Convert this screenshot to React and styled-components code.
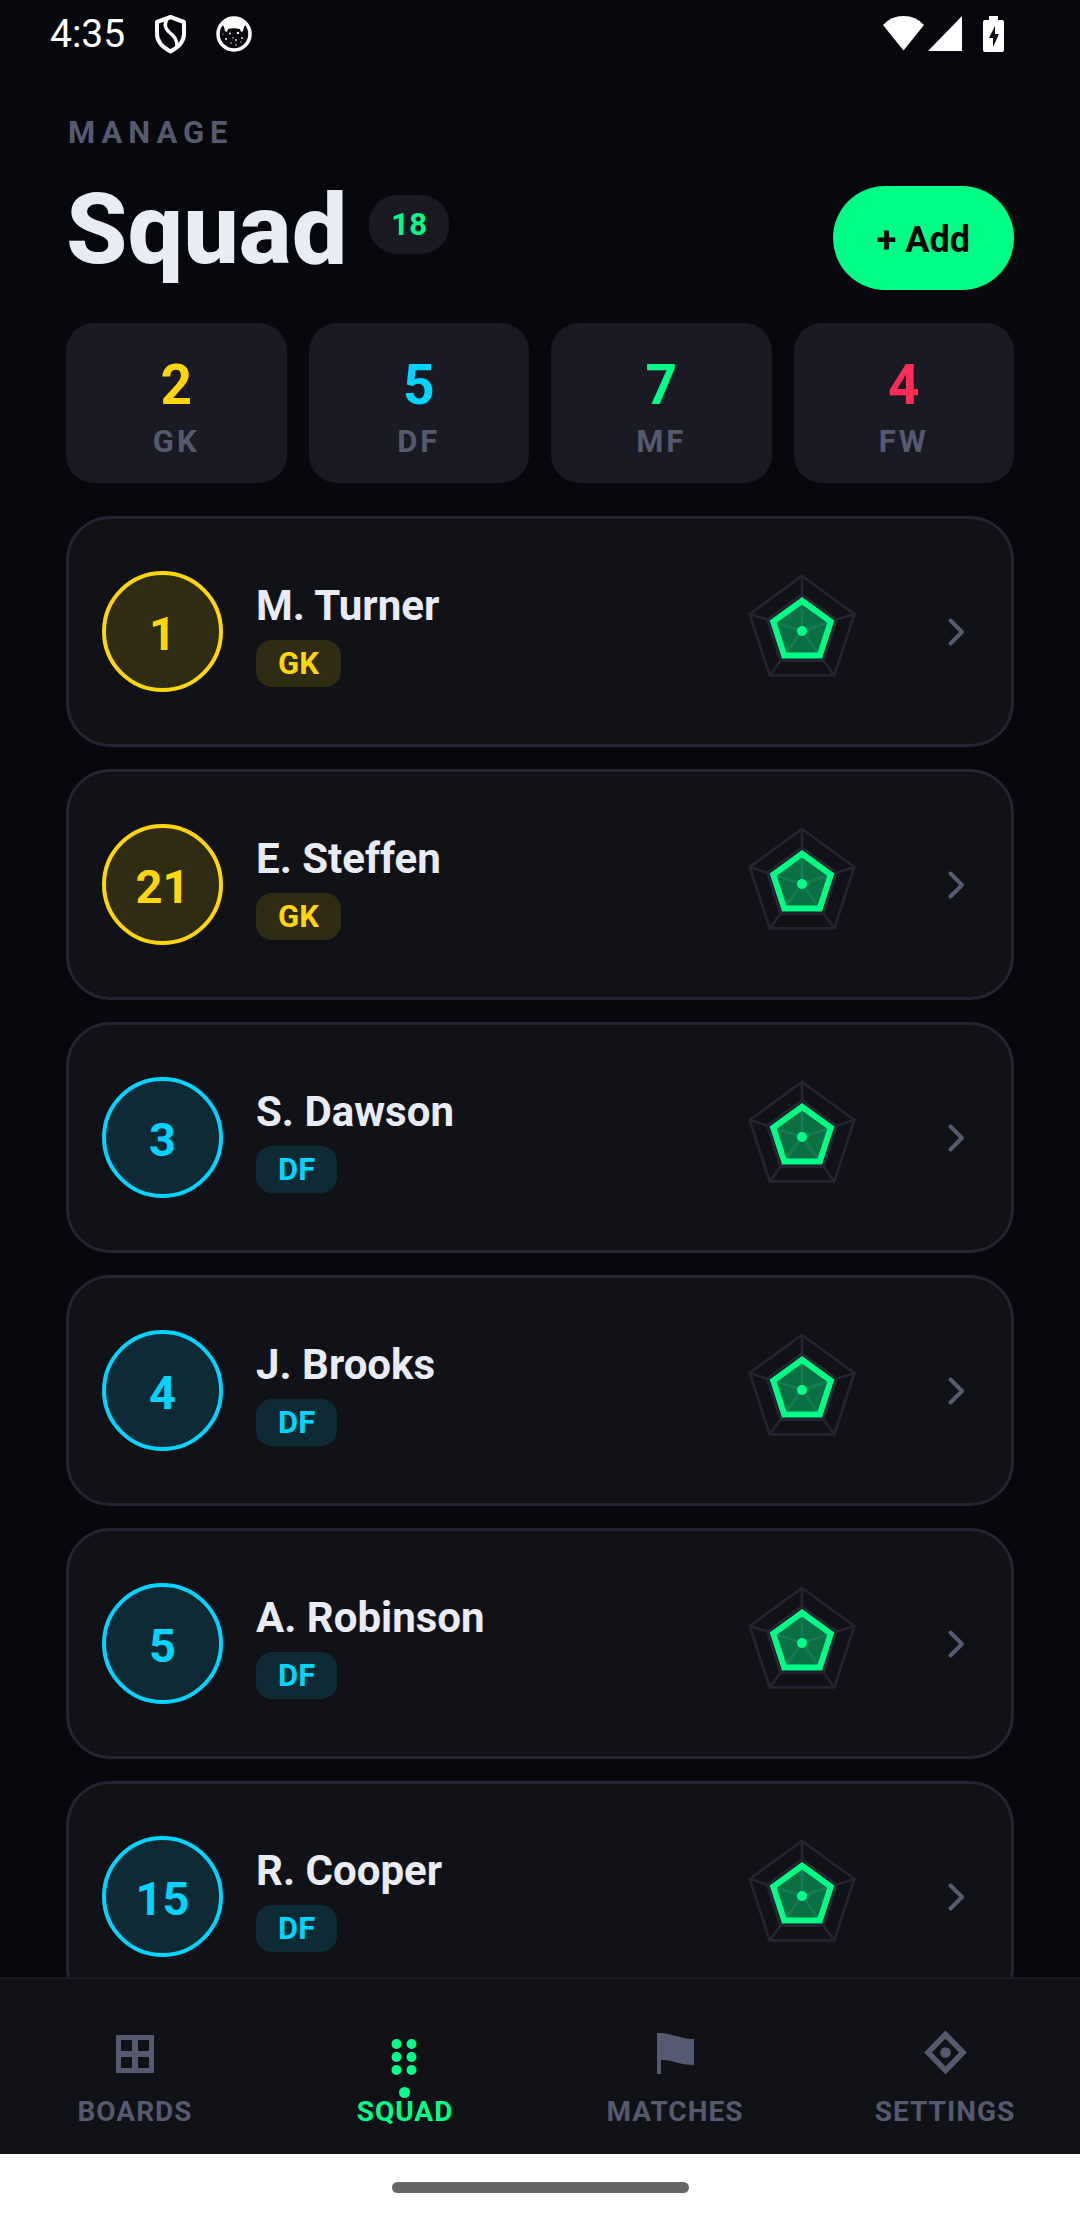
import React from "react";
import styled, { createGlobalStyle } from "styled-components";

const colors = {
    GK: "#ffd60a",
    DF: "#00d4ff",
    MF: "#00ff87",
    FW: "#ff2d55",
};

const stats = [
    { role: "GK", count: 2 },
    { role: "DF", count: 5 },
    { role: "MF", count: 7 },
    { role: "FW", count: 4 },
];

const players = [
    { number: 1, name: "M. Turner", role: "GK" },
    { number: 21, name: "E. Steffen", role: "GK" },
    { number: 3, name: "S. Dawson", role: "DF" },
    { number: 4, name: "J. Brooks", role: "DF" },
    { number: 5, name: "A. Robinson", role: "DF" },
    { number: 15, name: "R. Cooper", role: "DF" },
];

function App(){
    return (
        <Screen>
            <GlobalStyle />
            <StatusBar>
                <span>4:35</span>
                <ShieldIcon />
                <CatIcon />
                <SystemIcons />
            </StatusBar>
            <Header>
                <div>
                    <Eyebrow>MANAGE</Eyebrow>
                    <TitleRow>
                        <Title>Squad</Title>
                        <Count>18</Count>
                    </TitleRow>
                </div>
                <AddButton type="button">+ Add</AddButton>
            </Header>
            <Stats>
                {stats.map((stat) => (
                    <Stat key={stat.role} $color={colors[stat.role]}>
                        <strong>{stat.count}</strong>
                        <span>{stat.role}</span>
                    </Stat>
                ))}
            </Stats>
            <List>
                {players.map((player) => (
                    <li key={player.number}>
                        <PlayerCard player={player} />
                    </li>
                ))}
            </List>
            <Nav>
                <NavItem href="#boards"><BoardsIcon />BOARDS</NavItem>
                <NavItem href="#squad" aria-current="page"><SquadIcon />SQUAD<ActiveDot /></NavItem>
                <NavItem href="#matches"><MatchesIcon />MATCHES</NavItem>
                <NavItem href="#settings"><SettingsIcon />SETTINGS</NavItem>
            </Nav>
            <GestureBar><div /></GestureBar>
        </Screen>
    )
}

function PlayerCard({ player }){
    return (
        <Card type="button">
            <Shirt $color={colors[player.role]}>{player.number}</Shirt>
            <Info>
                <Name>{player.name}</Name>
                <Role $color={colors[player.role]}>{player.role}</Role>
            </Info>
            <Radar />
            <Chevron />
        </Card>
    )
}

//Five corners of a pentagon, the first one pointing up
const corners = (radius) => [0, 1, 2, 3, 4].map((i) => {
    const angle = (i * 72 - 90) * Math.PI / 180;
    return [radius * Math.cos(angle), radius * Math.sin(angle)];
});

const Radar = () => (
    <RadarSvg viewBox="-83 -82 165 165" aria-hidden="true">
        <g fill="none" stroke="#252433" strokeWidth="2.75">
            <polygon points={corners(55).join(" ")} />
            <polygon points={corners(36.5).join(" ")} />
            {corners(55).map(([x, y], i) => <line key={i} x1="0" y1="0" x2={x} y2={y} />)}
        </g>
        <polygon points={corners(30.3).join(" ")} fill="#00ff87" fillOpacity="0.4" stroke="#00ff87" strokeWidth="6" />
        <circle r="5" fill="#00ff87" />
    </RadarSvg>
);

const Chevron = () => (
    <svg width="44" height="44" viewBox="0 0 44 44" aria-hidden="true">
        <path d="M16.5 10.5 28 22 16.5 33.5" fill="none" stroke="#555a70" strokeWidth="4" strokeLinecap="round" strokeLinejoin="round" />
    </svg>
);

const ShieldIcon = () => (
    <svg width="31" height="38" viewBox="0 0 31 38" fill="none" stroke="#fff" aria-hidden="true">
        <path d="M15.5 2 29 7v12c0 7-5 13-13.500 17.500C7 32 2 26 2 19V7Z" strokeWidth="4" strokeLinejoin="round" />
        <path d="M12 4C9 10 10 13 14 17c5 4 8 7 8 14" strokeWidth="3.500" />
    </svg>
);

const CatIcon = () => (
    <svg width="36" height="36" viewBox="0 0 36 36" aria-hidden="true">
        <circle cx="18" cy="18" r="16" fill="none" stroke="#fff" strokeWidth="3.500" />
        <path d="M6 8C9 4 13 2 18 2s9 2 12 6l-2 3-1 4-2 1-1-3c-4-1-8-1-12 0l-1 3-2-1-1-4Z" fill="#fff" />
        <g fill="#fff">
            <circle cx="14" cy="17.500" r="0.900" /><circle cx="22" cy="17" r="1.200" />
            <circle cx="10" cy="23" r="1" /><circle cx="17" cy="22" r="0.700" />
            <circle cx="20" cy="24" r="0.900" /><circle cx="26" cy="22" r="0.900" />
            <circle cx="15" cy="27" r="0.700" /><circle cx="20" cy="29" r="0.700" />
            <circle cx="25" cy="26" r="0.600" /><circle cx="7" cy="18" r="0.600" />
        </g>
    </svg>
);

const SystemIcons = () => (
    <SystemSvg viewBox="0 0 121 38" fill="#fff" aria-hidden="true">
        <path d="M0 10Q8 1 20.500 1T41 10L20.500 35.500Z" />
        <path d="M79 1v35H45Z" />
        <path fillRule="evenodd" d="M106 1h9v4h4q2 0 2 2v28q0 2-2 2h-17q-2 0-2-2V7q0-2 2-2h4ZM112 11l-6 12h4v9l6-13h-4Z" />
    </SystemSvg>
);

const BoardsIcon = () => (
    <svg width="44" height="44" viewBox="0 0 44 44" aria-hidden="true">
        <path fillRule="evenodd" fill="currentColor" d="M3 3h38v38H3ZM8 8v11h11V8ZM25 8v11h11V8ZM8 25v11h11V25ZM25 25v11h11V25Z" />
    </svg>
);

const SquadIcon = () => (
    <svg width="44" height="44" viewBox="0 0 44 44" fill="currentColor" aria-hidden="true">
        {[12, 25, 38].map((y) => (
            <g key={y}>
                <circle cx="13.5" cy={y} r="5" />
                <circle cx="28.5" cy={y} r="5" />
            </g>
        ))}
    </svg>
);

const MatchesIcon = () => (
    <svg width="44" height="44" viewBox="0 0 44 44" aria-hidden="true">
        <path fill="currentColor" d="M4 1c17 0 22 6 37 6v26c-15 0-20-5-33-5v14H4Z" />
    </svg>
);

const SettingsIcon = () => (
    <svg width="44" height="44" viewBox="0 0 44 44" aria-hidden="true">
        <path d="M22.5 2.500 40 20.500 22.5 38.500 5 20.500Z" fill="none" stroke="currentColor" strokeWidth="5.500" />
        <circle cx="22.5" cy="20.500" r="5.300" fill="currentColor" />
    </svg>
);

const GlobalStyle = createGlobalStyle`
    *{
        margin: 0;
        padding: 0;
        box-sizing: border-box;
    }
    body{
        background: #07080d;
        font-family: Roboto, sans-serif;
    }
    button{
        font-family: inherit;
        border: none;
        cursor: pointer;
    }
    svg{
        display: block;
        flex-shrink: 0;
        overflow: visible;
    }
`;

const Screen = styled.main`
    height: 100vh;
    display: flex;
    flex-direction: column;
    color: #eaecf5;
`;

const StatusBar = styled.div`
    display: flex;
    align-items: center;
    gap: 30px;
    height: 67px;
    padding: 0px 76px 0px 50px;
    font-size: 39px;
    color: white;
`;

const SystemSvg = styled.svg`
    width: 121px;
    height: 38px;
    margin-left: auto;
`;

const Header = styled.header`
    display: flex;
    align-items: flex-end;
    justify-content: space-between;
    padding: 48px 66px 0px 66px;
`;

const Eyebrow = styled.p`
    padding-left: 2px;
    font-size: 31px;
    line-height: 35px;
    font-weight: 700;
    letter-spacing: 6px;
    color: #555a70;
`;

const TitleRow = styled.div`
    display: flex;
    align-items: center;
    gap: 22px;
    margin-top: 19px;
`;

const Title = styled.h1`
    font-size: 99px;
    line-height: 121px;
    font-weight: 800;
`;

const Count = styled.span`
    margin-bottom: 10px;
    padding: 11px 22px;
    border-radius: 28px;
    background: #1a1a24;
    color: #00ff87;
    font-size: 31px;
    line-height: 37px;
    font-weight: 700;
`;

const AddButton = styled.button`
    height: 104px;
    padding: 3px 44px 0px 44px;
    border-radius: 52px;
    background: #00ff87;
    color: black;
    font-size: 36px;
    font-weight: 700;
`;

const Stats = styled.section`
    display: grid;
    grid-template-columns: repeat(4, 1fr);
    gap: 22px;
    padding: 33px 66px;
`;

const Stat = styled.div`
    display: flex;
    flex-direction: column;
    align-items: center;
    height: 160px;
    padding-top: 29px;
    border-radius: 28px;
    background: #1a1a24;
    strong{
        font-size: 55px;
        line-height: 66px;
        font-weight: 700;
        color: ${(props) => props.$color};
    }
    span{
        font-size: 31px;
        line-height: 48px;
        font-weight: 700;
        letter-spacing: 3px;
        color: #555a70;
    }
`;

const List = styled.ul`
    flex: 1;
    min-height: 0;
    overflow-y: auto;
    scrollbar-width: none;
    padding: 0px 66px;
    list-style: none;
    li{
        margin-bottom: 22px;
    }
`;

const Card = styled.button`
    display: flex;
    align-items: center;
    width: 100%;
    padding: 30px 33px;
    border: 3px solid #252433;
    border-radius: 44px;
    background: #111217;
    color: inherit;
    text-align: left;
`;

const Shirt = styled.span`
    display: flex;
    align-items: center;
    justify-content: center;
    width: 121px;
    height: 121px;
    padding-top: 3px;
    border: 4px solid ${(props) => props.$color};
    border-radius: 50%;
    background: ${(props) => props.$color}22;
    color: ${(props) => props.$color};
    font-size: 47px;
    font-weight: 700;
`;

const Info = styled.span`
    flex: 1;
    display: flex;
    flex-direction: column;
    align-items: flex-start;
    gap: 5px;
    margin-left: 33px;
`;

const Name = styled.span`
    font-size: 42px;
    line-height: 59px;
    font-weight: 700;
`;

const Role = styled.span`
    padding: 5px 22px;
    border-radius: 16px;
    background: ${(props) => props.$color}22;
    color: ${(props) => props.$color};
    font-size: 31px;
    line-height: 37px;
    font-weight: 700;
`;

const RadarSvg = styled.svg`
    width: 165px;
    height: 165px;
    margin-right: 50px;
`;

const Nav = styled.nav`
    display: grid;
    grid-template-columns: repeat(4, 1fr);
    height: 177px;
    border-top: 2px solid #1a1a24;
    background: #111217;
`;

const NavItem = styled.a`
    position: relative;
    display: flex;
    flex-direction: column;
    align-items: center;
    gap: 15px;
    padding-top: 53px;
    font-size: 28px;
    line-height: 42px;
    font-weight: 700;
    letter-spacing: 1px;
    text-decoration: none;
    color: #555a70;
    &[aria-current]{
        color: #00ff87;
    }
`;

//Marker that sits over the label of the open tab
const ActiveDot = styled.span`
    position: absolute;
    top: 108px;
    left: calc(50% - 6px);
    width: 11px;
    height: 11px;
    border-radius: 50%;
    background: #00ff87;
`;

const GestureBar = styled.div`
    display: flex;
    align-items: center;
    justify-content: center;
    height: 66px;
    background: white;
    div{
        width: 297px;
        height: 11px;
        border-radius: 6px;
        background: #666666;
    }
`;

export default App;
